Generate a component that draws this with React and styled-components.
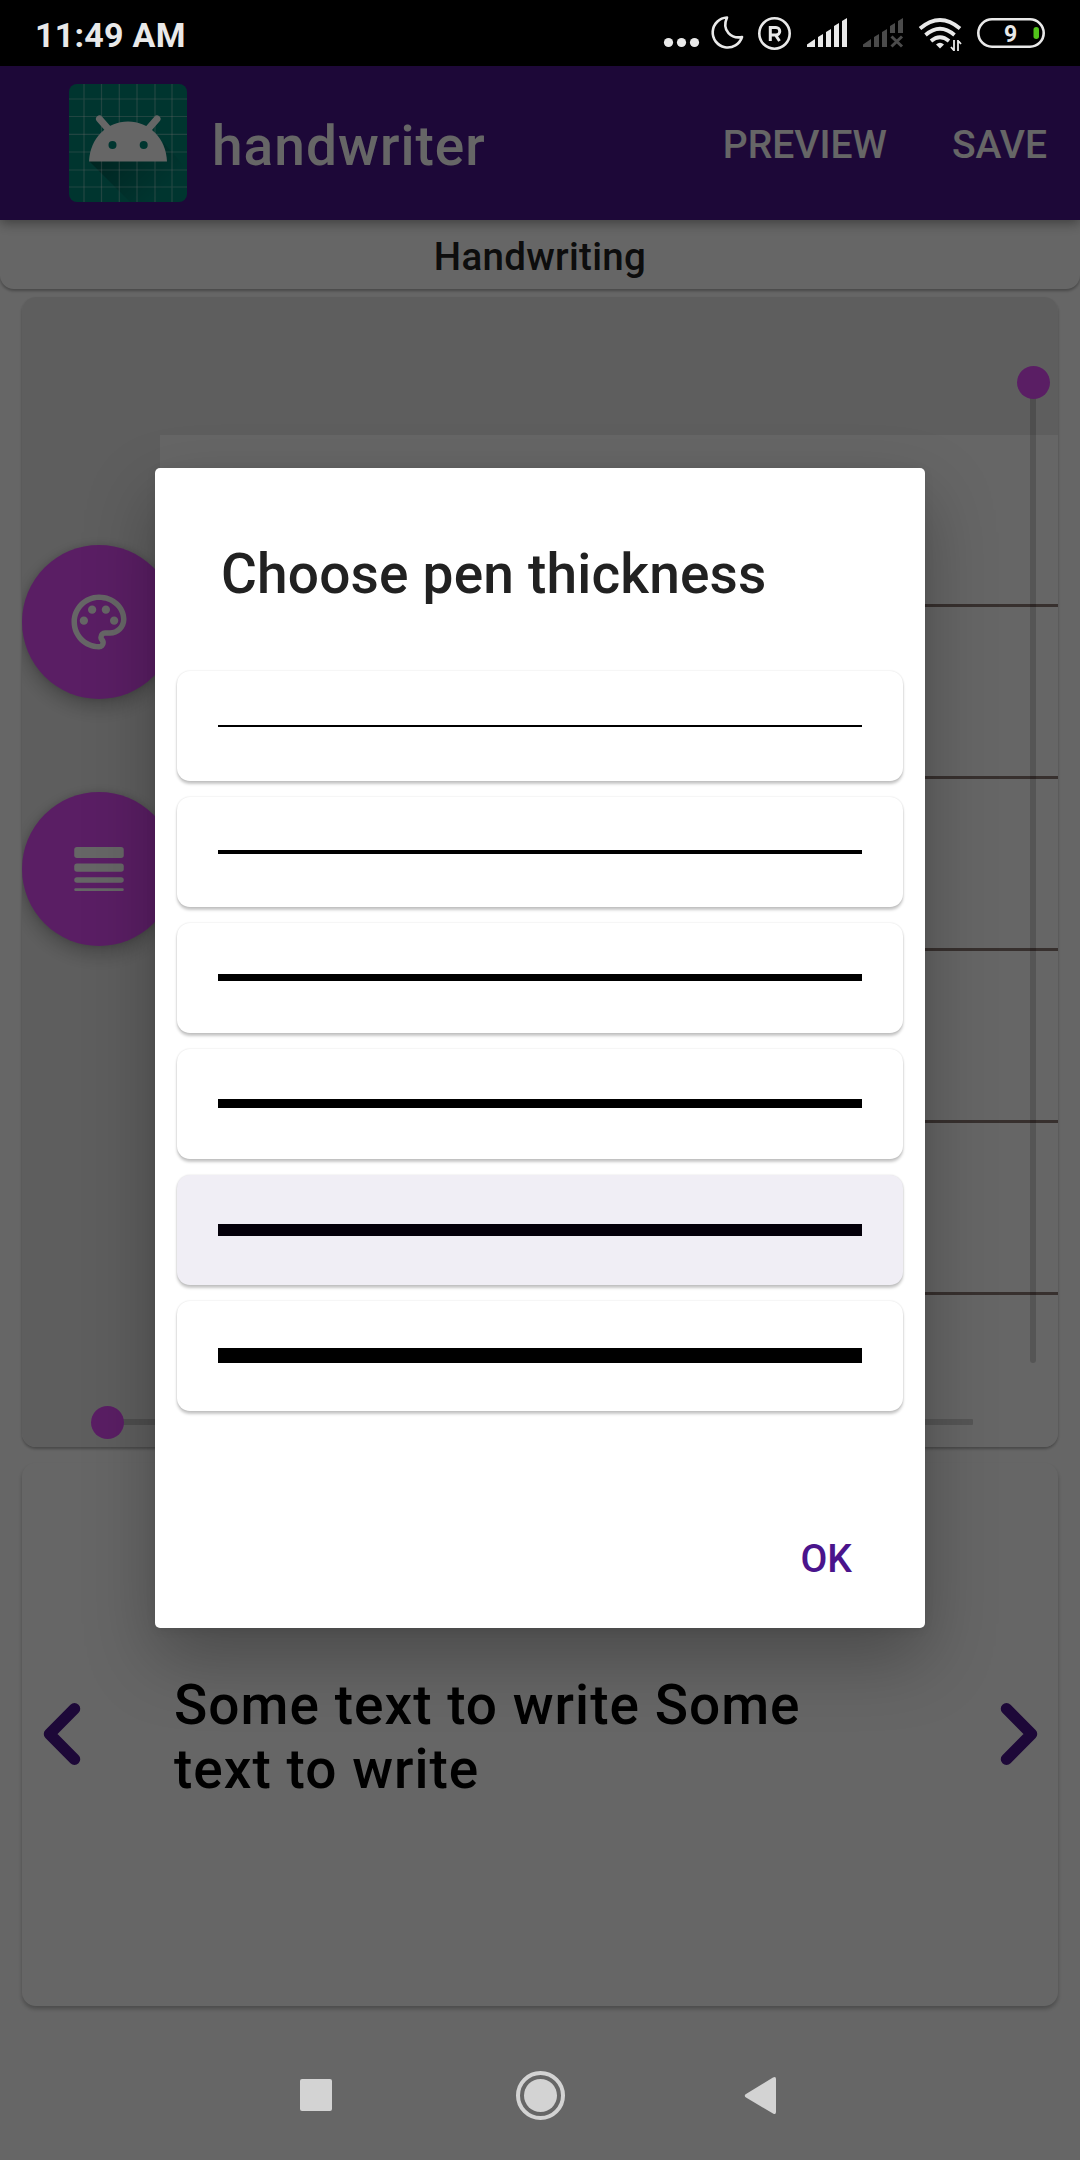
import React from "react";
import styled, { createGlobalStyle } from "styled-components";

const Global = createGlobalStyle`
  * { box-sizing: border-box; }
  body { margin: 0; background: #fff; font-family: Roboto, "Noto Sans", sans-serif; }
`;

const Screen = styled.div`
  position: relative;
  width: 1080px;
  height: 2160px;
  overflow: hidden;
  display: flex;
  flex-direction: column;
  background: #fff;
`;

const StatusBar = styled.header`
  position: relative;
  z-index: 3;
  flex: none;
  height: 66px;
  padding: 0 34px 0 35px;
  background: #000;
  color: #e9e9e9;
  display: flex;
  align-items: center;
  justify-content: space-between;
`;

const Clock = styled.span`
  font-size: 34px;
  font-weight: 700;
  line-height: 66px;
  letter-spacing: 0.25px;
  padding-top: 3px;
`;

const StatusIcons = styled.svg`
  display: block;
  width: 384px;
  height: 66px;
  fill: #e9e9e9;
  stroke: none;
`;

const AppBar = styled.div`
  position: relative;
  z-index: 1;
  flex: none;
  height: 154px;
  padding: 0 33px 0 69px;
  background: #4a148c;
  box-shadow: 0 3px 12px rgba(0, 0, 0, 0.4);
  color: #fff;
  display: flex;
  align-items: center;
`;

const Logo = styled.svg`
  display: block;
  width: 118px;
  height: 118px;
`;

const AppTitle = styled.h1`
  margin: 0 auto 0 25px;
  padding-top: 5px;
  font-size: 55px;
  font-weight: 500;
  letter-spacing: 1.05px;
`;

const BarAction = styled.button`
  margin-left: 65px;
  padding: 3px 0 0;
  border: 0;
  background: none;
  color: inherit;
  font: 500 39px/46px Roboto, sans-serif;
  letter-spacing: 0;
`;

const SectionTitle = styled.h2`
  flex: none;
  height: 69px;
  margin: 0;
  text-align: center;
  font-size: 38.5px;
  font-weight: 500;
  line-height: 74px;
  letter-spacing: 0.3px;
  color: #212121;
  border-radius: 0 0 14px 14px;
  box-shadow: 0 2px 3px rgba(0, 0, 0, 0.3);
`;

const Content = styled.main`
  flex: 1;
  padding: 8px 22px 0;
  display: flex;
  flex-direction: column;
  gap: 16px;
`;

const Board = styled.section`
  position: relative;
  flex: none;
  height: 1150px;
  overflow: hidden;
  border-radius: 14px;
  background: #ececec;
  padding: 138px 0 0 138px;
`;

const BoardFrame = styled.div`
  flex: none;
  border-radius: 14px;
  box-shadow: 0 2px 3px rgba(0, 0, 0, 0.3);
`;

const Paper = styled.div`
  height: 100%;
  padding-top: 169px;
  background: #fff;
  display: flex;
  flex-direction: column;
  gap: 169px;
`;

const Rule = styled.i`
  display: block;
  height: 3px;
  background: #8b7874;
`;

const Fab = styled.button`
  position: absolute;
  left: 0;
  top: ${(p) => p.$top}px;
  width: 154px;
  height: 154px;
  padding: 0;
  border: 0;
  border-radius: 50%;
  background: #e04dfa;
  box-shadow: 0 8px 20px rgba(0, 0, 0, 0.26), 0 0 6px rgba(0, 0, 0, 0.12);
  display: grid;
  place-items: center;

  svg { display: block; width: 66px; height: 66px; fill: #fff; }
`;

const VSlider = styled.div`
  position: absolute;
  top: 85px;
  right: 22px;
  width: 6px;
  height: 981px;
  border-radius: 3px;
  background: rgba(0, 0, 0, 0.17);
`;

const HSlider = styled.div`
  position: absolute;
  left: 85px;
  bottom: 22px;
  width: 866px;
  height: 6px;
  border-radius: 1px;
  background: rgba(0, 0, 0, 0.17);
`;

const Thumb = styled.span`
  position: absolute;
  left: ${(p) => p.$x}px;
  top: ${(p) => p.$y}px;
  width: 33px;
  height: 33px;
  border-radius: 50%;
  background: #e04dfa;
`;

const TextCard = styled.section`
  flex: none;
  height: 543px;
  padding: 0 20px 2px 21px;
  border-radius: 14px;
  box-shadow: 0 3px 4px rgba(0, 0, 0, 0.26);
  display: flex;
  align-items: center;
  justify-content: space-between;
`;

const Chevron = styled.svg`
  display: block;
  flex: none;
  width: 38px;
  height: 62px;
  fill: none;
  stroke: #4a148c;
  stroke-width: 11.5;
  stroke-linecap: round;
  stroke-linejoin: round;
`;

const Sample = styled.p`
  width: 730px;
  margin: 0 auto 0 93px;
  padding-top: 6px;
  font-size: 55px;
  font-weight: 500;
  line-height: 64px;
  letter-spacing: 1.02px;
  color: #000;
`;

const Scrim = styled.div`
  position: absolute;
  inset: 66px 0 0;
  z-index: 2;
  padding-top: 402px;
  background: rgba(0, 0, 0, 0.6);
  display: flex;
  justify-content: center;
  align-items: flex-start;
`;

const Dialog = styled.div`
  width: 770px;
  height: 1160px;
  padding: 68px 22px 0;
  border-radius: 5px;
  background: #fff;
  box-shadow: 0 30px 70px rgba(0, 0, 0, 0.28), 0 2px 10px rgba(0, 0, 0, 0.08);
  display: flex;
  flex-direction: column;
`;

const DialogTitle = styled.h3`
  margin: 0 0 59px 44px;
  font-size: 55px;
  font-weight: 500;
  line-height: 76px;
  letter-spacing: 0.18px;
  color: #212121;
`;

const Options = styled.div`
  display: flex;
  flex-direction: column;
  gap: 16px;
`;

const Option = styled.button`
  height: 110px;
  padding: 0 41px;
  border: 0;
  border-radius: 13px;
  background: ${(p) => (p.$pressed ? "#f0eef5" : "#fff")};
  box-shadow: 0 3px 3px rgba(0, 0, 0, 0.22), 0 0 2px rgba(0, 0, 0, 0.14);
  display: flex;
  align-items: center;
`;

const Stroke = styled.span`
  flex: 1;
  height: ${(p) => p.$size}px;
  margin-bottom: ${(p) => p.$size % 2}px;
  background: ${(p) => (p.$pressed ? "#04000a" : "#000")};
`;

const OkButton = styled.button`
  align-self: flex-end;
  margin: 125px 51px 0 0;
  padding: 0;
  border: 0;
  background: none;
  color: #4a148c;
  font: 500 39px/46px Roboto, sans-serif;
`;

const NavBar = styled.nav`
  position: absolute;
  left: 0;
  right: 0;
  bottom: 0;
  z-index: 3;
  height: 130px;
  padding: 0 291px;
  display: flex;
  align-items: center;
  justify-content: space-between;

  svg { display: block; width: 50px; height: 50px; fill: #d3d3d3; }
`;

const THICKNESSES = [2, 4, 7, 9, 12, 15];
const PRESSED = 12;

function AndroidLogo() {
  const columns = [15, 32.5, 50.3, 68, 86, 103];
  return (
    <Logo viewBox="0 0 118 118">
      <defs>
        <clipPath id="tile"><rect width="118" height="118" rx="8" /></clipPath>
        <linearGradient id="cast" gradientUnits="userSpaceOnUse" x1="30" y1="60" x2="85" y2="115">
          <stop offset="0" stopColor="#000" stopOpacity=".34" />
          <stop offset="1" stopColor="#000" stopOpacity="0" />
        </linearGradient>
      </defs>
      <g clipPath="url(#tile)">
        <rect width="118" height="118" fill="#008577" />
        <path d="M20 77 61 118H118V85L94 58 97 77Z" fill="url(#cast)" />
        {columns.map((v) => (
          <path key={v} d={`M${v} 0V118M0 ${v}H118`} stroke="#fff" strokeOpacity=".33" strokeWidth="1.2" />
        ))}
        <path d="M30.500 35 41 47M88 35 77.500 47" stroke="#fff" strokeWidth="7" strokeLinecap="round" />
        <path d="M20 77.500C21 54 38 37.500 59 37.500S97 54 98 77.500Z" fill="#fff" />
        <circle cx="43.500" cy="61" r="4" fill="#008577" />
        <circle cx="74.700" cy="61" r="4" fill="#008577" />
      </g>
    </Logo>
  );
}

function StatusGlyphs() {
  return (
    <StatusIcons viewBox="662 0 384 66">
      <circle cx="668.500" cy="42.500" r="4.600" />
      <circle cx="681.500" cy="42.500" r="4.600" />
      <circle cx="694.500" cy="42.500" r="4.600" />
      <path d="M727 17.500A15 15 0 1 0 742 37C732 39 721 31 727 17.500Z" fill="none" stroke="#e9e9e9" strokeWidth="2.600" strokeLinejoin="round" />
      <circle cx="774.500" cy="33.500" r="15.200" fill="none" stroke="#e9e9e9" strokeWidth="2.600" />
      <path d="M770.300 41V27.500H776a3.700 3.700 0 0 1 0 7.500H771M775.500 35 779.500 41" fill="none" stroke="#e9e9e9" strokeWidth="3" />
      <path d="M807 47V44.500L815 39V47ZM818 47V37L823 34V47ZM826 47V32L831 29V47ZM834 47V26L839 23V47ZM842 47V21L847 18V47Z" />
      <path d="M863 47V44.500L871 39V47ZM874 47V37L879 34V47ZM882 47V32L887 29V47ZM890 33V26L895 23V33ZM898 33V21L903 18V33Z" fill="#4b4b4b" />
      <path d="M891.500 36.500 902 46.500M902 36.500 891.500 46.500" stroke="#4b4b4b" strokeWidth="3" />
      <g fill="none" stroke="#e9e9e9" strokeWidth="3.800">
        <path d="M920 28.500Q940 11.500 960 28.500" />
        <path d="M925.500 35Q940 22.500 954.500 35" />
        <path d="M931 41Q940 33.500 949 41" />
      </g>
      <path d="M936 44.500Q940 41 944 44.500L940 48.500Z" />
      <path d="M954 40V51M958 51V40M951 47 954 50.500M961 44 958 40.500" fill="none" stroke="#e9e9e9" strokeWidth="1.800" />
      <rect x="978.300" y="19.300" width="65.400" height="27.400" rx="13.700" fill="none" stroke="#e9e9e9" strokeWidth="2.600" />
      <rect x="1033.500" y="27" width="5.500" height="12" rx="2.700" fill="#52c41a" />
      <text x="1010.500" y="41.500" textAnchor="middle" fontFamily="Roboto, sans-serif" fontWeight="700" fontSize="23">9</text>
    </StatusIcons>
  );
}

export default function App() {
  return (
    <>
      <Global />
      <Screen>
        <StatusBar>
          <Clock>11:49 AM</Clock>
          <StatusGlyphs />
        </StatusBar>

        <AppBar>
          <AndroidLogo />
          <AppTitle>handwriter</AppTitle>
          <BarAction>PREVIEW</BarAction>
          <BarAction>SAVE</BarAction>
        </AppBar>
        <SectionTitle>Handwriting</SectionTitle>

        <Content>
          <BoardFrame>
            <Board>
              <Paper>
                {[0, 1, 2, 3, 4].map((n) => <Rule key={n} />)}
              </Paper>
              <Fab $top={248} aria-label="Color">
                <svg viewBox="0 0 24 24">
                  <path d="M12 22C6.490 22 2 17.510 2 12S6.490 2 12 2s10 4.040 10 9c0 3.310-2.690 6-6 6h-1.770c-.28 0-.5.220-.5.500 0 .120.050.230.130.330.410.470.640 1.060.640 1.670A2.500 2.500 0 0 1 12 22zm0-18c-4.410 0-8 3.590-8 8s3.590 8 8 8c.280 0 .500-.220.500-.500a.540.540 0 0 0-.140-.350c-.410-.460-.630-1.050-.630-1.650a2.500 2.500 0 0 1 2.500-2.500H16c2.210 0 4-1.790 4-4 0-3.860-3.590-7-8-7z" />
                  <circle cx="6.500" cy="11.500" r="1.500" />
                  <circle cx="9.500" cy="7.500" r="1.500" />
                  <circle cx="14.500" cy="7.500" r="1.500" />
                  <circle cx="17.500" cy="11.500" r="1.500" />
                </svg>
              </Fab>
              <Fab $top={495} aria-label="Thickness">
                <svg viewBox="0 0 24 24">
                  <rect x="3" y="4" width="18" height="4" rx="1" />
                  <rect x="3" y="10" width="18" height="3" rx="1" />
                  <rect x="3" y="15" width="18" height="2" rx="1" />
                  <rect x="3" y="19" width="18" height="1" rx=".5" />
                </svg>
              </Fab>
              <VSlider><Thumb $x={-13.5} $y={-16} /></VSlider>
              <HSlider><Thumb $x={-16.5} $y={-13.5} /></HSlider>
            </Board>
          </BoardFrame>

          <TextCard>
            <Chevron viewBox="0 0 38 62"><path d="M31.500 5.800 6.500 31 31.500 56.200" /></Chevron>
            <Sample>Some text to write Some text to write</Sample>
            <Chevron viewBox="0 0 38 62"><path d="M6.500 5.800 31.500 31 6.500 56.200" /></Chevron>
          </TextCard>
        </Content>

        <Scrim>
          <Dialog role="dialog">
            <DialogTitle>Choose pen thickness</DialogTitle>
            <Options>
              {THICKNESSES.map((size) => (
                <Option key={size} $pressed={size === PRESSED}>
                  <Stroke $size={size} $pressed={size === PRESSED} />
                </Option>
              ))}
            </Options>
            <OkButton>OK</OkButton>
          </Dialog>
        </Scrim>

        <NavBar>
          <svg viewBox="0 0 50 50"><rect x="9" y="9" width="32" height="32" rx="2" /></svg>
          <svg viewBox="0 0 50 50">
            <circle cx="25.500" cy="25.500" r="22.500" fill="none" stroke="#d3d3d3" strokeWidth="4" />
            <circle cx="25.500" cy="25.500" r="16.500" />
          </svg>
          <svg viewBox="0 0 50 50"><path d="M7 24 34 7.500Q37 6 37 9V42Q37 45 34 43.500L7 27.500Q4.500 25.500 7 24Z" /></svg>
        </NavBar>
      </Screen>
    </>
  );
}
